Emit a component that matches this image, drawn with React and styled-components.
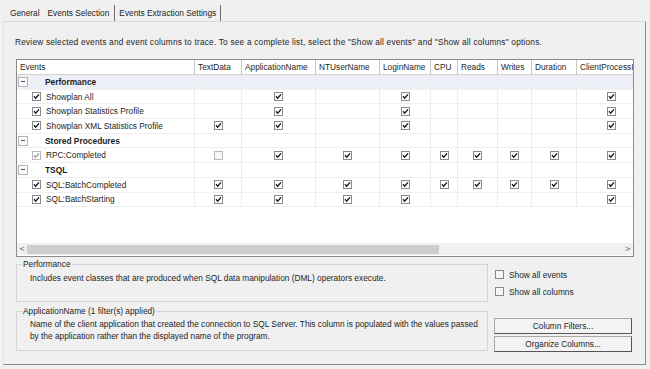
import React from "react";
import styled, { createGlobalStyle } from "styled-components";

const GlobalStyle = createGlobalStyle`
  html, body {
    margin: 0;
    padding: 0;
    background: #f0f0f0;
  }
  body {
    font-family: "Liberation Sans", Arial, sans-serif;
    font-size: 8.3px;
    color: #1e1e1e;
  }
`;

const Window = styled.div`
  width: 650px;
  height: 369px;
  padding-top: 5px;
  box-sizing: border-box;
  background: #f0f0f0;
  display: flex;
  flex-direction: column;
`;

const TabStrip = styled.div`
  display: flex;
  height: 16px;
  padding-left: 6px;
`;

const Tab = styled.div`
  display: flex;
  align-items: center;
  padding: 0 ${(p) => p.pad || 4}px 0 ${(p) => p.lead || 4}px;
  border-right: ${(p) => (p.divider ? "1px solid #6e6e6e" : "none")};
  color: #1e1e1e;
  white-space: nowrap;
`;

const Panel = styled.div`
  margin: 0 4px 4px 3px;
  flex: 1;
  border-top: 1px solid #d8d8d8;
  border-left: 1px solid #e2e2e2;
  border-right: 1px solid #8a8a8a;
  border-bottom: 1px solid #8a8a8a;
  padding: 15px 10px 0 8px;
  display: flex;
  flex-direction: column;
`;

const Intro = styled.div`
  line-height: 10px;
  height: 10px;
  padding-left: 3px;
  letter-spacing: 0.2px;
  white-space: nowrap;
`;

const Grid = styled.div`
  margin: 12px 0 0 4px;
  width: 618px;
  height: 198px;
  box-sizing: border-box;
  border: 1px solid #8c8c8c;
  background: #fff;
  display: flex;
  flex-direction: column;
  overflow: hidden;
`;

const Viewport = styled.div`
  flex: 1;
  overflow: hidden;
`;

const Row = styled.div`
  display: flex;
  height: ${(p) => (p.header ? 15 : 14.7)}px;
  box-sizing: border-box;
  background: ${(p) => (p.selected ? "#edf0f6" : "#fff")};
  border-bottom: 1px solid ${(p) => (p.header ? "#d2d2d2" : "#efefef")};
`;

const Cell = styled.div`
  flex: 0 0 ${(p) => p.w}px;
  box-sizing: border-box;
  border-right: 1px solid ${(p) => (p.header ? "#c6c6c6" : "#ececec")};
  display: flex;
  align-items: center;
  justify-content: ${(p) => (p.center ? "center" : "flex-start")};
  padding-left: ${(p) => (p.header ? 3 : 0)}px;
  white-space: nowrap;
  overflow: hidden;
`;

const Expander = styled.div`
  width: 8px;
  height: 8px;
  margin: 0 17px 0 1px;
  border: 1px solid #b4b4b4;
  background: #fafafa;
  display: flex;
  align-items: center;
  justify-content: center;
  &::after {
    content: "";
    width: 4px;
    height: 1px;
    background: #555;
  }
`;

const GroupName = styled.span`
  font-weight: bold;
  font-size: 8.4px;
`;

const EventName = styled.span`
  margin-left: 5px;
`;

const Indent = styled.div`
  width: 15px;
  flex: none;
`;

const HScroll = styled.div`
  height: 12px;
  margin-bottom: 1px;
  background: #f0f0f0;
  display: flex;
  align-items: center;
  color: #555;
`;

const Arrow = styled.div`
  width: 10px;
  text-align: center;
  font-family: "DejaVu Sans", sans-serif;
  font-size: 7px;
`;

const Track = styled.div`
  flex: 1;
  height: 9px;
  margin: 0 2px 0 0;
  display: flex;
`;

const Thumb = styled.div`
  width: 412px;
  height: 100%;
  background: #cdcdcd;
`;

const Bottom = styled.div`
  display: flex;
  margin-top: 3px;
  margin-left: 4px;
`;

const Boxes = styled.div`
  width: 472px;
  display: flex;
  flex-direction: column;
  gap: 5px;
`;

const GroupBox = styled.fieldset`
  margin: 0;
  padding: 0 8px 0 2px;
  border: 1px solid #d3d3d3;
  height: ${(p) => p.h}px;
  box-sizing: border-box;
  min-width: 0;
  legend {
    padding: 0 1px;
    margin-left: 3px;
    line-height: 9px;
  }
`;

const BoxText = styled.div`
  line-height: 12px;
  margin-top: ${(p) => p.top || 2}px;
  padding-left: 11px;
`;

const Side = styled.div`
  margin-left: 6px;
  width: 138px;
  display: flex;
  flex-direction: column;
`;

const Option = styled.label`
  display: flex;
  align-items: center;
  height: 17px;
  gap: 5px;
  padding-left: 1px;
`;

const Options = styled.div`
  margin-top: 6px;
  display: flex;
  flex-direction: column;
`;

const Buttons = styled.div`
  margin-top: 18px;
  display: flex;
  flex-direction: column;
  gap: 2px;
`;

const Button = styled.button`
  height: 16px;
  width: 138px;
  font: inherit;
  color: #1e1e1e;
  background: #f3f3f3;
  border: 1px solid #a7a7a7;
  border-right-color: #555;
  border-bottom-color: #555;
  padding: 0;
`;

function Check({ checked = true, disabled = false }) {
  return (
    <svg width="9" height="9" viewBox="0 0 9 9" style={{ display: "block" }}>
      <rect
        x="0.5"
        y="0.5"
        width="8"
        height="8"
        fill={checked ? "#fff" : "#f6f6f6"}
        stroke={disabled ? "#b8b8b8" : "#8a8a8a"}
      />
      {checked && (
        <path
          d="M2 4.3 L3.7 6.2 L7 2.4"
          fill="none"
          stroke={disabled ? "#9a9a9a" : "#1a1a1a"}
          strokeWidth="1.4"
        />
      )}
    </svg>
  );
}

const columns = [
  ["TextData", 47],
  ["ApplicationName", 74],
  ["NTUserName", 64],
  ["LoginName", 51],
  ["CPU", 27],
  ["Reads", 40],
  ["Writes", 34],
  ["Duration", 45],
  ["ClientProcessID", 70],
];

const groups = [
  {
    name: "Performance",
    selected: true,
    events: [
      { name: "Showplan All", on: [1, 3, 8] },
      { name: "Showplan Statistics Profile", on: [1, 3, 8] },
      { name: "Showplan XML Statistics Profile", on: [0, 1, 3, 8] },
    ],
  },
  {
    name: "Stored Procedures",
    events: [
      { name: "RPC:Completed", disabled: true, off: [0], on: [1, 2, 3, 4, 5, 6, 7, 8] },
    ],
  },
  {
    name: "TSQL",
    events: [
      { name: "SQL:BatchCompleted", on: [0, 1, 2, 3, 4, 5, 6, 7, 8] },
      { name: "SQL:BatchStarting", on: [0, 1, 2, 3, 8] },
    ],
  },
];

function EventRow({ ev }) {
  return (
    <Row>
      <Cell w={178}>
        <Indent />
        <Check disabled={ev.disabled} />
        <EventName>{ev.name}</EventName>
      </Cell>
      {columns.map(([c, w], i) => (
        <Cell key={c} w={w} center>
          {ev.on.includes(i) && <Check />}
          {ev.off && ev.off.includes(i) && <Check checked={false} disabled />}
        </Cell>
      ))}
    </Row>
  );
}

export default function App() {
  return (
    <Window>
      <GlobalStyle />
      <TabStrip>
        <Tab>General</Tab>
        <Tab divider pad={5} lead={4}>
          Events Selection
        </Tab>
        <Tab divider pad={4} lead={4}>
          Events Extraction Settings
        </Tab>
      </TabStrip>
      <Panel>
        <Intro>
          Review selected events and event columns to trace. To see a complete
          list, select the "Show all events" and "Show all columns" options.
        </Intro>
        <Grid>
          <Viewport>
            <Row header>
              <Cell header w={178}>
                Events
              </Cell>
              {columns.map(([c, w]) => (
                <Cell header key={c} w={w}>
                  {c}
                </Cell>
              ))}
            </Row>
            {groups.map((g) => (
              <React.Fragment key={g.name}>
                <Row selected={g.selected}>
                  <Cell w={178}>
                    <Expander />
                    <GroupName>{g.name}</GroupName>
                  </Cell>
                  {columns.map(([c, w]) => (
                    <Cell key={c} w={w} />
                  ))}
                </Row>
                {g.events.map((ev) => (
                  <EventRow key={ev.name} ev={ev} />
                ))}
              </React.Fragment>
            ))}
          </Viewport>
          <HScroll>
            <Arrow>&lt;</Arrow>
            <Track>
              <Thumb />
            </Track>
            <Arrow>&gt;</Arrow>
          </HScroll>
        </Grid>
        <Bottom>
          <Boxes>
            <GroupBox h={42}>
              <legend>Performance</legend>
              <BoxText top={3}>
                Includes event classes that are produced when SQL data
                manipulation (DML) operators execute.
              </BoxText>
            </GroupBox>
            <GroupBox h={44}>
              <legend>ApplicationName (1 filter(s) applied)</legend>
              <BoxText top={2}>
                Name of the client application that created the connection to
                SQL Server. This column is populated with the values passed
                <br />
                by the application rather than the displayed name of the
                program.
              </BoxText>
            </GroupBox>
          </Boxes>
          <Side>
            <Options>
              <Option>
                <Check checked={false} />
                Show all events
              </Option>
              <Option>
                <Check checked={false} />
                Show all columns
              </Option>
            </Options>
            <Buttons>
              <Button>Column Filters...</Button>
              <Button>Organize Columns...</Button>
            </Buttons>
          </Side>
        </Bottom>
      </Panel>
    </Window>
  );
}
